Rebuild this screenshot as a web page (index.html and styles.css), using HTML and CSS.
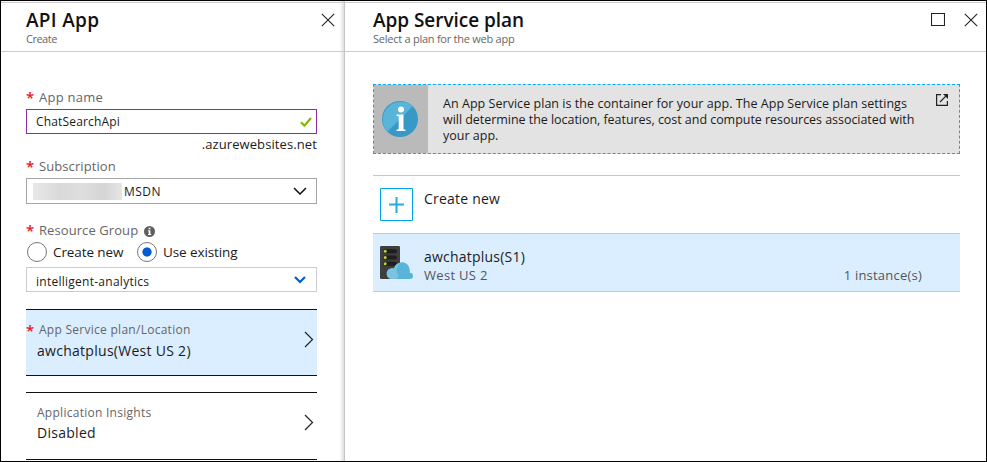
FILE: index.html
```html
<!DOCTYPE html>
<html lang="en">
<head>
<meta charset="utf-8">
<title>API App</title>
<link rel="stylesheet" href="styles.css">
</head>
<body>
<div class="portal">
  <section class="blade blade-create">
    <header class="blade-head">
      <div class="titles">
        <h1 class="t-api">API App</h1>
        <p class="t-create">Create</p>
      </div>
      <svg class="close" width="14" height="14" viewBox="0 0 14 14"><path d="M.8.8 13.2 13.2M13.2.8.8 13.2"/></svg>
    </header>
    <div class="form">
      <div class="label label-name"><i class="req">*</i><span class="l-name">App name</span></div>
      <div class="field field-name">
        <span class="v-name">ChatSearchApi</span>
        <svg width="12" height="10" viewBox="0 0 12 10"><path d="M1 5.200 4.400 8.600 11 1" fill="none" stroke="#7fba00" stroke-width="2.200"/></svg>
      </div>
      <div class="suffix"><span>.azurewebsites.net</span></div>
      <div class="label label-sub"><i class="req">*</i><span class="l-sub">Subscription</span></div>
      <div class="field field-sub">
        <span class="redacted"></span><span class="v-msdn">MSDN</span>
        <svg width="14" height="8" viewBox="0 0 14 8"><path d="M1 1 7 7 13 1" fill="none" stroke="#111" stroke-width="1.5"/></svg>
      </div>
      <div class="label label-rg"><i class="req">*</i><span class="l-rg">Resource Group</span>
        <svg width="11" height="11" viewBox="0 0 11 11"><circle cx="5.5" cy="5.5" r="5.5" fill="#5f5f5f"/><path d="M4.600 1.700h1.800v1.600H4.600zM4 4.300h2.400v3.800h.8V9H4v-.9h.7V5.200H4z" fill="#fff"/></svg>
      </div>
      <div class="radios">
        <span class="radio"></span><span class="r-new">Create new</span>
        <span class="radio on"></span><span class="r-use">Use existing</span>
      </div>
      <div class="field field-rg">
        <span class="v-rg">intelligent-analytics</span>
        <svg width="12" height="8" viewBox="0 0 12 8"><path d="M1 1 6 6 11 1" fill="none" stroke="#015cda" stroke-width="2.2"/></svg>
      </div>
      <div class="picker selected">
        <div>
          <div class="picker-label"><i class="req">*</i><span class="p-plan">App Service plan/Location</span></div>
          <div class="picker-value"><span class="p-val">awchatplus(West US 2)</span></div>
        </div>
        <svg width="10" height="17" viewBox="0 0 10 17"><path d="M1 1 8.5 8.5 1 16"/></svg>
      </div>
      <div class="picker">
        <div>
          <div class="picker-label indent"><span class="p-ins">Application Insights</span></div>
          <div class="picker-value"><span class="p-dis">Disabled</span></div>
        </div>
        <svg width="10" height="17" viewBox="0 0 10 17"><path d="M1 1 8.5 8.5 1 16"/></svg>
      </div>
    </div>
  </section>
  <section class="blade blade-plan">
    <header class="blade-head">
      <div class="titles">
        <h1 class="t-plan">App Service plan</h1>
        <p class="t-select">Select a plan for the web app</p>
      </div>
      <svg class="max" width="14" height="13" viewBox="0 0 14 13"><path d="M.5.5h13v12H.5z"/></svg>
      <svg class="close" width="14" height="14" viewBox="0 0 14 14"><path d="M.8.8 13.2 13.2M13.2.8.8 13.2"/></svg>
    </header>
    <div class="plans">
      <div class="info">
        <div class="info-icon">
          <svg width="36" height="36" viewBox="0 0 36 36"><circle cx="18" cy="18" r="18" fill="#3999c6"/><path d="M5.300 30.700A18 18 0 0 1 30.700 5.300z" fill="#59b4d9"/><circle cx="19" cy="8.500" r="3" fill="#fff"/><path d="M14.500 13.500H21.500V28.300L23.500 28.800V30H14.500V28.800L16.700 28.300V15.200L14.500 14.700z" fill="#fff"/></svg>
        </div>
        <div class="info-text">
          <span class="i-1">An App Service plan is the container for your app. The App Service plan settings</span>
          <span class="i-2">will determine the location, features, cost and compute resources associated with</span>
          <span class="i-3">your app.</span>
        </div>
        <svg class="ext" width="12" height="12" viewBox="0 0 12 12"><path d="M5 .6H.6v10.800h10.800V7M4 8 10.800 1.200" fill="none" stroke="#222" stroke-width="1.200"/><path d="M7 0h5v5z" fill="#222"/></svg>
      </div>
      <div class="row">
        <svg class="row-icon" width="33" height="33" viewBox="0 0 33 33"><path d="M.5.5h32v32H.5z" fill="#fff" stroke="#00a4ef"/><path d="M16.500 9v16M9 16.500h15" stroke="#2ba9e6" stroke-width="2" fill="none"/></svg>
        <div class="row-text"><span class="c-new">Create new</span></div>
      </div>
      <div class="row selected">
        <svg class="row-icon" width="33" height="33" viewBox="0 0 33 33"><rect width="20" height="33" rx="1.3" fill="#3e3e3e"/><g fill="#1e1e1e"><rect x="3" y="3.2" width="14" height="4" rx="2"/><rect x="3" y="9.6" width="14" height="4" rx="2"/><rect x="3" y="15.8" width="14" height="4" rx="2"/></g><g fill="#b8d432"><circle cx="5.2" cy="5.2" r="1.5"/><circle cx="5.2" cy="11.6" r="1.5"/><circle cx="5.2" cy="17.8" r="1.5"/></g><path d="M12 33a5.300 5.300 0 0 1 0-10.700 3 3 0 0 1 2 .2 8 8 0 0 1 15.800 1.500v2.800A3.100 3.100 0 0 1 30 33z" fill="#59b4d9"/><path d="M12 33a5.300 5.300 0 0 1 0-10.700 3 3 0 0 1 2 .2 8 8 0 0 1 7-5.600C17 20 15 25 18 28c2 2-1 4-2 5z" fill="#7ac3e1"/></svg>
        <div class="row-text"><span class="c-aw">awchatplus(S1)</span><div class="sub"><span class="c-west">West US 2</span><span class="c-inst">1 instance(s)</span></div></div>
      </div>
    </div>
  </section>
</div>
</body>
</html>
```
FILE: styles.css
```css
* { box-sizing: border-box; }
body { margin: 0; font-family: "Open Sans", "Noto Sans", sans-serif; color: #1b1b1b; background: #fff; }
svg { display: block; flex: none; }
span { white-space: nowrap; }
h1, p { margin: 0; white-space: nowrap; }
.portal { display: flex; width: 987px; height: 462px; border: 1px solid #000; overflow: hidden; }
.blade { padding-top: 1px; }
.blade-create { width: 344px; border-right: 1px solid #c4c4c4; box-shadow: inset -4px 0 4px -3px #ccc; }
.blade-plan { width: 641px; }
.blade-head { display: flex; height: 50px; border-top: 1px solid #ccc; border-bottom: 1px solid #ccc; padding: 4px 9px 0 25px; }
.blade-plan .blade-head { padding: 4px 8px 0 28px; }
.titles { flex: 1; padding-top: 1px; }
h1 { font-size: 19px; font-weight: 600; line-height: 24px; color: #111; }
.t-api { letter-spacing: .3px; }
.t-plan { letter-spacing: -.05px; }
.titles p { font-size: 11px; line-height: 14px; color: #666; letter-spacing: -.25px; }
.titles .t-create { letter-spacing: -.5px; }
.close, .max { margin-top: 6px; fill: none; stroke: #222; stroke-width: 1.1; }
.max { margin-right: 19px; }
.form { padding: 36px 27px 0 25px; }
.req { font: normal 600 15px/16px "Open Sans", sans-serif; color: #e81123; width: 13px; flex: none; height: 16px; }
.label { display: flex; align-items: center; height: 18px; font-size: 13px; line-height: 18px; color: #666; letter-spacing: .08px; }
.l-name { letter-spacing: .25px; }
.field { display: flex; align-items: center; justify-content: space-between; height: 25px; border: 1px solid #ccc; padding: 0 10px 0 9px; font-size: 12px; line-height: 16px; letter-spacing: .16px; }
.field-name { border-color: #8a2da5; margin-top: 3px; padding-right: 4px; }
.suffix { display: flex; justify-content: flex-end; font-size: 13px; line-height: 18px; margin-top: 1px; letter-spacing: .1px; }
.label-sub { margin-top: 4px; }
.field-sub { height: 26px; margin-top: 3px; border-color: #a6a6a6; padding: 0 9px 0 6px; }
.redacted { width: 89px; height: 17px; background: linear-gradient(90deg, #e8e8e8, #d9d9d9 30%, #dedede 55%, #d5d5d5 80%, #e6e6e6); margin-right: 2px; }
.v-msdn { flex: 1; letter-spacing: .5px; padding-top: 1px; }
.label-rg { margin-top: 17px; }
.label-rg svg { margin: 2px 0 0 6px; }
.radios { display: flex; align-items: center; height: 20px; margin-top: 3px; font-size: 13.5px; line-height: 20px; letter-spacing: -.1px; }
.radio { width: 20px; height: 20px; border: 1px solid #767676; border-radius: 50%; margin: 0 6px 0 1px; flex: none; }
.radio.on { background: radial-gradient(circle, #015cda 4.2px, transparent 5px); }
.r-new { width: 83px; }
.field-rg { margin-top: 5px; }
.v-rg { letter-spacing: .26px; padding-top: 4px; }
.picker { display: flex; justify-content: space-between; height: 68px; border: 1px solid #111; border-width: 1px 0; margin-top: 16px; padding: 10px 3px 0 0; }
.picker.selected { background: #dbeeff; margin-top: 17px; height: 67px; padding-top: 11px; }
.picker svg { margin-top: 11px; fill: none; stroke: #222; stroke-width: 1.2; }
.picker.selected svg { margin-top: 10px; }
.picker-label { display: flex; align-items: center; height: 18px; font-size: 12px; line-height: 18px; color: #666; letter-spacing: .27px; }
.indent { padding: 2px 0 0 11px; }
.picker-value { font-size: 14px; line-height: 22px; margin-top: 1px; padding-left: 11px; letter-spacing: .28px; }
.plans { padding: 32px 26px 0 28px; }
.info { display: flex; height: 70px; border: 1px dashed #00b0f0; background: #e3e3e3; }
.info-icon { width: 54px; padding: 16px 0 0 8px; background: #bababa; flex: none; }
.info-text { display: flex; flex-direction: column; flex: 1; min-width: 0; padding: 11px 0 0 15px; font-size: 12.5px; line-height: 16px; }
.i-1 { letter-spacing: .04px; }
.i-2 { letter-spacing: -.04px; }
.ext { margin: 9px 11px 0 0; }
.row { display: flex; height: 58px; border-top: 1px solid #c8c8c8; padding: 12px 38px 0 7px; }
.info + .row { margin-top: 21px; }
.row.selected { background: #dbeeff; height: 59px; border-bottom: 1px solid #c8c8c8; }
.row-icon { margin-right: 11px; }
.row-text { flex: 1; font-size: 14px; line-height: 20px; padding-top: 1px; letter-spacing: .22px; }
.sub { display: flex; justify-content: space-between; font-size: 13px; line-height: 18px; color: #555; margin-top: -1px; }
.c-west { letter-spacing: .3px; }
```
